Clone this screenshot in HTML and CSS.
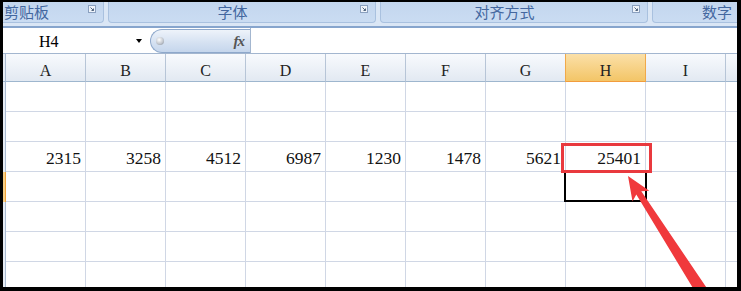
FILE: index.html
```html
<!DOCTYPE html>
<html lang="zh">
<head>
  <meta charset="UTF-8">
  <title>Excel 求和</title>
  <link rel="stylesheet" href="styles.css">
</head>
<body>
  <div class="frame">
    <!-- 功能区分组标题 -->
    <div class="ribbon">
      <div class="group group-first">
        <span class="glabel">剪贴板</span>
        <span class="launcher"><svg width="8" height="8" viewBox="0 0 8 8"><rect x="0.5" y="0.5" width="7" height="7" fill="#eef3fa" stroke="#8aa0bf"/><path d="M2.5 2.5 L5.5 5.5 M3.5 5.5 H5.5 V3.5" stroke="#51657f" fill="none"/></svg></span>
      </div>
      <div class="group">
        <span class="glabel">字体</span>
        <span class="launcher"><svg width="8" height="8" viewBox="0 0 8 8"><rect x="0.5" y="0.5" width="7" height="7" fill="#eef3fa" stroke="#8aa0bf"/><path d="M2.5 2.5 L5.5 5.5 M3.5 5.5 H5.5 V3.5" stroke="#51657f" fill="none"/></svg></span>
      </div>
      <div class="group">
        <span class="glabel">对齐方式</span>
        <span class="launcher"><svg width="8" height="8" viewBox="0 0 8 8"><rect x="0.5" y="0.5" width="7" height="7" fill="#eef3fa" stroke="#8aa0bf"/><path d="M2.5 2.5 L5.5 5.5 M3.5 5.5 H5.5 V3.5" stroke="#51657f" fill="none"/></svg></span>
      </div>
      <div class="group group-num">
        <span class="glabel">数字</span>
      </div>
    </div>

    <!-- 名称框 + 编辑栏 -->
    <div class="formula-bar">
      <div class="name-box">
        <span class="name">H4</span>
        <span class="drop"></span>
      </div>
      <div class="fx-box">
        <span class="knob"></span>
        <span class="fx">fx</span>
      </div>
      <div class="formula-input"></div>
    </div>

    <!-- 表格 -->
    <div class="sheet">
      <div class="rh hdr-rh"></div>
      <div class="ch">A</div>
      <div class="ch">B</div>
      <div class="ch">C</div>
      <div class="ch">D</div>
      <div class="ch">E</div>
      <div class="ch">F</div>
      <div class="ch">G</div>
      <div class="ch ch-active">H</div>
      <div class="ch">I</div>
      <div class="ch"></div>

      <div class="rh"></div>
      <div class="cell"></div><div class="cell"></div><div class="cell"></div><div class="cell"></div><div class="cell"></div>
      <div class="cell"></div><div class="cell"></div><div class="cell"></div><div class="cell"></div><div class="cell"></div>

      <div class="rh"></div>
      <div class="cell"></div><div class="cell"></div><div class="cell"></div><div class="cell"></div><div class="cell"></div>
      <div class="cell"></div><div class="cell"></div><div class="cell"></div><div class="cell"></div><div class="cell"></div>

      <div class="rh"></div>
      <div class="cell">2315</div>
      <div class="cell">3258</div>
      <div class="cell">4512</div>
      <div class="cell">6987</div>
      <div class="cell">1230</div>
      <div class="cell">1478</div>
      <div class="cell">5621</div>
      <div class="cell">25401</div>
      <div class="cell"></div>
      <div class="cell"></div>

      <div class="rh rh-active"></div>
      <div class="cell"></div><div class="cell"></div><div class="cell"></div><div class="cell"></div><div class="cell"></div>
      <div class="cell"></div><div class="cell"></div><div class="cell"></div><div class="cell"></div><div class="cell"></div>

      <div class="rh"></div>
      <div class="cell"></div><div class="cell"></div><div class="cell"></div><div class="cell"></div><div class="cell"></div>
      <div class="cell"></div><div class="cell"></div><div class="cell"></div><div class="cell"></div><div class="cell"></div>

      <div class="rh"></div>
      <div class="cell"></div><div class="cell"></div><div class="cell"></div><div class="cell"></div><div class="cell"></div>
      <div class="cell"></div><div class="cell"></div><div class="cell"></div><div class="cell"></div><div class="cell"></div>

      <div class="rh"></div>
      <div class="cell"></div><div class="cell"></div><div class="cell"></div><div class="cell"></div><div class="cell"></div>
      <div class="cell"></div><div class="cell"></div><div class="cell"></div><div class="cell"></div><div class="cell"></div>
    </div>

    <!-- 选中框与红色标注 -->
    <div class="sel-box"></div>
    <div class="mark-box"></div>
    <svg class="arrow" width="734" height="285" viewBox="3 2 734 285">
      <polygon points="628,176 649.3,190.8 641.3,191.2 708.6,290.7 698.4,297.1 636.3,194.4 632.5,201.6" fill="#f0393c"/>
    </svg>
  </div>
</body>
</html>
```

FILE: styles.css
```css
html, body {
  margin: 0;
  padding: 0;
  background: #000;
}
.frame {
  position: relative;
  margin: 2px 0 0 3px;
  width: 734px;
  height: 285px;
  overflow: hidden;
  background: #fff;
}

/* 功能区 */
.ribbon {
  display: flex;
  gap: 4px;
  height: 24px;
  background: #dae6f5;
  border-bottom: 2px solid #87a5cd;
  overflow: hidden;
}
.group {
  display: flex;
  flex: none;
  width: 268px;
  height: 21px;
  box-sizing: border-box;
  background: linear-gradient(#c3d6ee, #cadcf2);
  border: 1px solid #a9c1df;
  border-top: none;
  border-radius: 0 0 4px 4px;
}
.group-first {
  margin-left: -20px;
  width: 121px;
  padding-left: 20px;
}
.group-first .glabel {
  text-align: left;
}
.group-num {
  width: 200px;
  padding-left: 49px;
}
.group-num .glabel {
  text-align: left;
}
.glabel {
  flex: 1;
  text-align: center;
  font-family: "Noto Sans CJK SC", sans-serif;
  font-size: 15px;
  line-height: 19px;
  color: #43679f;
}
.launcher {
  flex: none;
  width: 8px;
  height: 8px;
  margin: 3px 7px 0 4px;
}
.launcher svg {
  display: block;
}

/* 编辑栏 */
.formula-bar {
  display: flex;
  height: 25px;
  border-bottom: 1px solid #a3b6cf;
}
.name-box {
  display: flex;
  align-items: center;
  width: 144px;
  flex: none;
}
.name {
  padding: 2px 0 0 36px;
  font-family: "Liberation Serif", "DejaVu Serif", serif;
  font-size: 16px;
}
.drop {
  margin-left: auto;
  margin-right: 5px;
  width: 0;
  height: 0;
  border-left: 3.5px solid transparent;
  border-right: 3.5px solid transparent;
  border-top: 4px solid #000;
}
.fx-box {
  display: flex;
  align-items: center;
  flex: none;
  margin: 1px 0 0 3px;
  width: 100px;
  height: 24px;
  box-sizing: border-box;
  border: 1px solid #8ea8cb;
  border-right: none;
  border-radius: 12px 0 0 12px;
  background: linear-gradient(#eef3fa, #d6e2f2 55%, #c5d6ec);
}
.knob {
  width: 8px;
  height: 8px;
  margin-left: 5px;
  border-radius: 50%;
  background: radial-gradient(circle at 40% 35%, #fff, #c3c8cf 55%, #7f8792);
}
.fx {
  margin-left: auto;
  margin-right: 6px;
  font-family: "Liberation Serif", "DejaVu Serif", serif;
  font-style: italic;
  font-weight: bold;
  font-size: 15px;
  color: #555;
  letter-spacing: -1px;
}
.formula-input {
  flex: 1;
  border-left: 1px solid #a3b6cf;
}

/* 表格 */
.sheet {
  display: grid;
  grid-template-columns: 3px repeat(10, 80px);
  grid-template-rows: 28px;
  grid-auto-rows: 30px;
  font-family: "Liberation Serif", "DejaVu Serif", serif;
}
.rh {
  box-sizing: border-box;
  background: #e6ecf4;
  border-right: 1px solid #a9bad0;
}
.hdr-rh {
  border-bottom: 1px solid #9eb6ce;
}
.rh-active {
  background: #f7cf86;
  border-right-color: #efa33a;
}
.ch {
  display: flex;
  align-items: flex-end;
  justify-content: center;
  box-sizing: border-box;
  background: linear-gradient(#f8fafd, #e2e9f2);
  border-right: 1px solid #b7c5d7;
  border-bottom: 1px solid #9eb6ce;
  font-size: 16px;
  line-height: 20px;
  color: #222;
}
.ch-active {
  background: linear-gradient(#fbe0a8, #f3c567);
  border-right-color: #f0a94a;
  border-bottom-color: #f29c3c;
  box-shadow: -1px 0 0 #f0a94a;
}
.cell {
  display: flex;
  align-items: flex-end;
  justify-content: flex-end;
  box-sizing: border-box;
  padding: 0 4px 3px 0;
  border-right: 1px solid #d0d7e5;
  border-bottom: 1px solid #d0d7e5;
  font-size: 17.5px;
  line-height: 20px;
  color: #111;
}

/* 选中框与红色标注 */
.sel-box {
  position: absolute;
  left: 561px;
  top: 168px;
  width: 83px;
  height: 32px;
  box-sizing: border-box;
  border: 2px solid #000;
}
.mark-box {
  position: absolute;
  left: 558px;
  top: 141px;
  width: 91px;
  height: 30px;
  box-sizing: border-box;
  border: 3px solid #e9393e;
}
.arrow {
  position: absolute;
  left: 0;
  top: 0;
}
```
